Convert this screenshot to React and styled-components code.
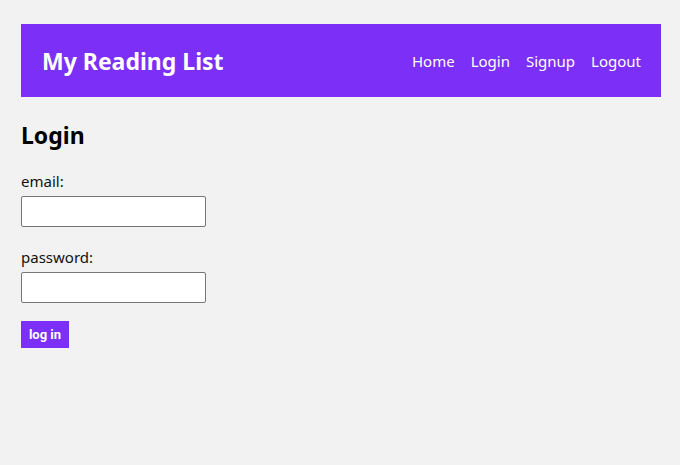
import React from "react";
import styled, { createGlobalStyle } from "styled-components";

const Global = createGlobalStyle`
  html, body { margin: 0; padding: 0; background: #f2f2f2; }
  body { font-family: "Noto Sans", "Open Sans", sans-serif; color: #111; }
`;

const Page = styled.div`
  padding: 24px 19px 0 21px;
`;

const NavBar = styled.nav`
  height: 73px;
  background: #7b2ff7;
  display: flex;
  align-items: center;
  justify-content: space-between;
  padding: 0 20px 0 21px;
  box-sizing: border-box;
`;

const Brand = styled.h1`
  margin: 0;
  font-size: 23px;
  font-weight: 700;
  color: #fff;
`;

const Links = styled.div`
  display: flex;
  gap: 16px;
`;

const NavLink = styled.a`
  color: #fff;
  text-decoration: none;
  font-size: 15px;
`;

const Title = styled.h2`
  margin: 22px 0 19px;
  font-size: 23px;
  font-weight: 700;
  color: #000;
`;

const Form = styled.form`
  display: flex;
  flex-direction: column;
  align-items: flex-start;
`;

const Label = styled.label`
  font-size: 15px;
  line-height: 22px;
  margin-bottom: 4px;
`;

const Input = styled.input`
  width: 185px;
  height: 31px;
  box-sizing: border-box;
  border: 1px solid #767676;
  border-radius: 2px;
  background: #fff;
  margin-bottom: 19px;
`;

const Button = styled.button`
  margin-top: -1px;
  background: #7b2ff7;
  color: #fff;
  border: none;
  font-family: Roboto, "Liberation Sans", sans-serif;
  font-weight: 700;
  font-size: 13px;
  width: 48px;
  height: 27px;
  padding: 0;
`;

export default function App() {
  return (
    <>
      <Global />
      <Page>
        <NavBar>
          <Brand>My Reading List</Brand>
          <Links>
            <NavLink href="#">Home</NavLink>
            <NavLink href="#">Login</NavLink>
            <NavLink href="#">Signup</NavLink>
            <NavLink href="#">Logout</NavLink>
          </Links>
        </NavBar>
        <Title>Login</Title>
        <Form onSubmit={(e) => e.preventDefault()}>
          <Label>email:</Label>
          <Input type="email" />
          <Label>password:</Label>
          <Input type="password" />
          <Button type="submit">log in</Button>
        </Form>
      </Page>
    </>
  );
}
